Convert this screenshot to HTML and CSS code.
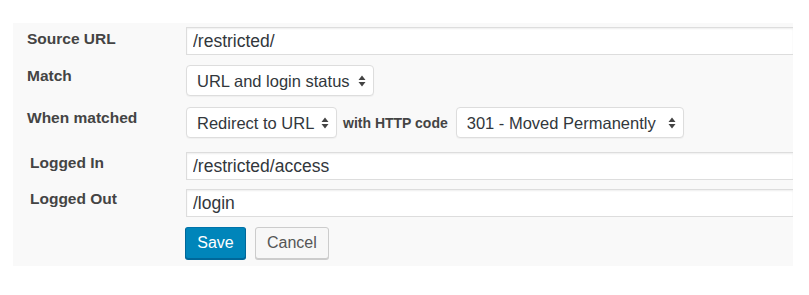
FILE: index.html
```html
<!DOCTYPE html>
<html lang="en">
<head>
    <meta charset="UTF-8">
    <meta name="viewport" content="width=device-width, initial-scale=1.0">
    <title>Edit Redirect</title>
    <link rel="stylesheet" href="styles.css">
</head>
<body>

    <form class="redirect-edit">
        <div class="row row-source">
            <label class="field-label" for="source">Source URL</label>
            <input class="text-input" type="text" id="source" value="/restricted/">
        </div>

        <div class="row row-match">
            <label class="field-label" for="match">Match</label>
            <div class="select-wrap">
                <select id="match" class="select-match">
                    <option>URL and login status</option>
                </select>
                <svg class="arrows" width="8" height="12" viewBox="0 0 8 12"><path d="M4 0.5 L7.5 5 L0.5 5 Z M4 11.5 L7.5 7 L0.5 7 Z" fill="#444"/></svg>
            </div>
        </div>

        <div class="row row-action">
            <label class="field-label" for="action">When matched</label>
            <div class="select-wrap">
                <select id="action" class="select-action">
                    <option>Redirect to URL</option>
                </select>
                <svg class="arrows" width="8" height="12" viewBox="0 0 8 12"><path d="M4 0.5 L7.5 5 L0.5 5 Z M4 11.5 L7.5 7 L0.5 7 Z" fill="#444"/></svg>
            </div>
            <span class="inline-label">with HTTP code</span>
            <div class="select-wrap">
                <select id="code" class="select-code">
                    <option>301 - Moved Permanently</option>
                </select>
                <svg class="arrows" width="8" height="12" viewBox="0 0 8 12"><path d="M4 0.5 L7.5 5 L0.5 5 Z M4 11.5 L7.5 7 L0.5 7 Z" fill="#444"/></svg>
            </div>
        </div>

        <div class="row row-in">
            <label class="field-label indent" for="loggedIn">Logged In</label>
            <input class="text-input" type="text" id="loggedIn" value="/restricted/access">
        </div>

        <div class="row row-out">
            <label class="field-label indent" for="loggedOut">Logged Out</label>
            <input class="text-input" type="text" id="loggedOut" value="/login">
        </div>

        <div class="row row-buttons">
            <span class="field-label"></span>
            <button type="submit" class="btn btn-primary">Save</button>
            <button type="button" class="btn">Cancel</button>
        </div>
    </form>

</body>
</html>
```

FILE: styles.css
```css
body {
    margin: 0;
    padding: 23px 16px 0 13px;
    background-color: #fff;
    font-family: "Liberation Sans", Arial, sans-serif;
    color: #444;
}

.redirect-edit {
    background-color: #f9f9f9;
    height: 243px;
    padding-top: 4px;
    box-sizing: border-box;
}

.row {
    display: flex;
    align-items: flex-start;
}

.field-label {
    width: 173px;
    flex-shrink: 0;
    padding-left: 14px;
    box-sizing: border-box;
    font-size: 15.5px;
    font-weight: bold;
    color: #444;
}

.field-label.indent {
    padding-left: 17px;
}

.text-input {
    flex: 1;
    height: 28px;
    box-sizing: border-box;
    margin: 0;
    padding: 0 6px;
    border: 1px solid #ddd;
    border-right: none;
    box-shadow: inset 0 1px 2px rgba(0, 0, 0, 0.07);
    background-color: #fff;
    font-family: inherit;
    font-size: 17.5px;
    color: #32373c;
}

.row-source .field-label { padding-top: 3px; }
.row-match { margin-top: 10px; }
.row-match .field-label { padding-top: 2px; }
.row-action { margin-top: 11px; }
.row-action .field-label { padding-top: 2px; }
.row-in { margin-top: 14px; }
.row-in .field-label { padding-top: 2px; }
.row-out { margin-top: 9px; }
.row-out .field-label { padding-top: 1px; }
.row-buttons { margin-top: 10px; }

.select-wrap {
    position: relative;
}

.select-wrap select {
    appearance: none;
    -webkit-appearance: none;
    height: 31px;
    margin: 0;
    padding: 0 20px 0 10px;
    border: 1px solid #ddd;
    border-radius: 4px;
    background-color: #fff;
    box-shadow: 0 1px 1px rgba(0, 0, 0, 0.04);
    font-family: inherit;
    font-size: 16.5px;
    color: #32373c;
}

.select-match { width: 188px; }
.select-action { width: 151px; }
.select-code { width: 228px; }

.arrows {
    position: absolute;
    right: 8px;
    top: 10px;
    pointer-events: none;
}

.inline-label {
    margin: 8px 8px 0 6px;
    font-size: 14px;
    font-weight: bold;
    color: #444;
}

.btn {
    height: 32px;
    margin: 0 9px 0 0;
    padding: 0 11px;
    border: 1px solid #ccc;
    border-radius: 3px;
    background-color: #f7f7f7;
    box-shadow: 0 1px 0 #ccc;
    font-family: inherit;
    font-size: 16px;
    color: #555;
}

.btn-primary {
    width: 61px;
    margin-left: -1px;
    background-color: #0085ba;
    border-color: #0073aa #006799 #006799;
    box-shadow: 0 1px 0 #006799;
    color: #fff;
}
```
